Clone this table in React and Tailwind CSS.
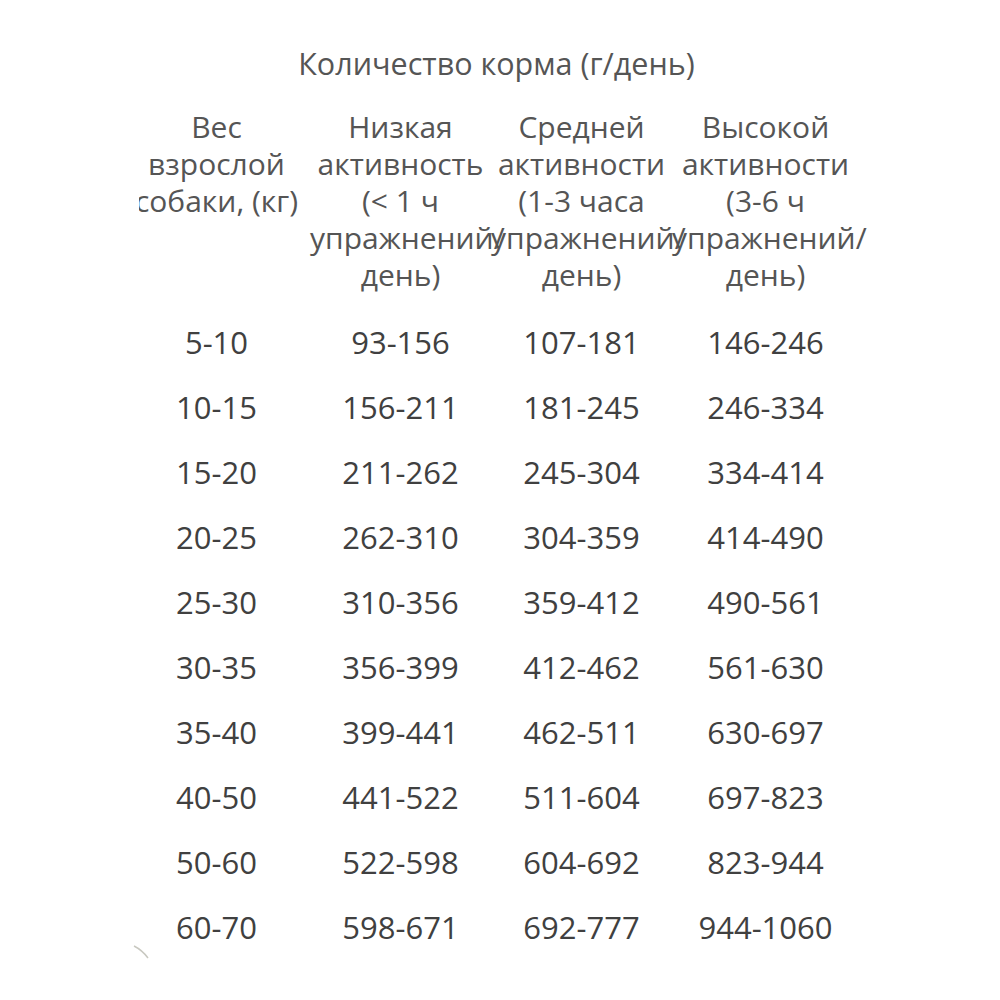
import React from "react";

const rows = [
  ["5-10", "93-156", "107-181", "146-246"],
  ["10-15", "156-211", "181-245", "246-334"],
  ["15-20", "211-262", "245-304", "334-414"],
  ["20-25", "262-310", "304-359", "414-490"],
  ["25-30", "310-356", "359-412", "490-561"],
  ["30-35", "356-399", "412-462", "561-630"],
  ["35-40", "399-441", "462-511", "630-697"],
  ["40-50", "441-522", "511-604", "697-823"],
  ["50-60", "522-598", "604-692", "823-944"],
  ["60-70", "598-671", "692-777", "944-1060"],
];

const cols = "grid grid-cols-[187px_181px_181px_187px]";

export default function App() {
  return (
    <div
      className="relative w-[1000px] h-[1000px] bg-white overflow-hidden text-[#4d4d4d]"
      style={{ fontFamily: '"Open Sans", "Noto Sans", sans-serif' }}
    >
      <div className="pt-[45px] text-[30px] leading-[37px] text-[#555]">
        <div className="text-center pr-[7px] text-[30.5px]">Количество корма (г/день)</div>
        <div className="ml-[139px] mt-[26px] overflow-hidden">
          <div className="-ml-[16px]">
            <div className={cols}>
              <div className="text-center">Вес взрослой собаки, (кг)</div>
              <div className="text-center">Низкая активность (&lt; 1 ч упражнений/день)</div>
              <div className="text-center">Средней активности (1-3 часа упражнений/день)</div>
              <div className="text-center">Высокой активности (3-6 ч упражнений/день)</div>
            </div>
            <div className="mt-[17px] text-[31px] text-[#404040]">
              {rows.map((r) => (
                <div key={r[0]} className={`${cols} h-[65px] items-center`}>
                  {r.map((c, i) => (
                    <div key={i} className="text-center">
                      {c}
                    </div>
                  ))}
                </div>
              ))}
            </div>
          </div>
        </div>
      </div>
      <svg className="absolute left-[128px] top-[940px]" width="30" height="25" viewBox="0 0 30 25">
        <path d="M6 6 Q14 10 20 18" stroke="#c8c8c0" strokeWidth="1.5" fill="none" />
      </svg>
    </div>
  );
}
